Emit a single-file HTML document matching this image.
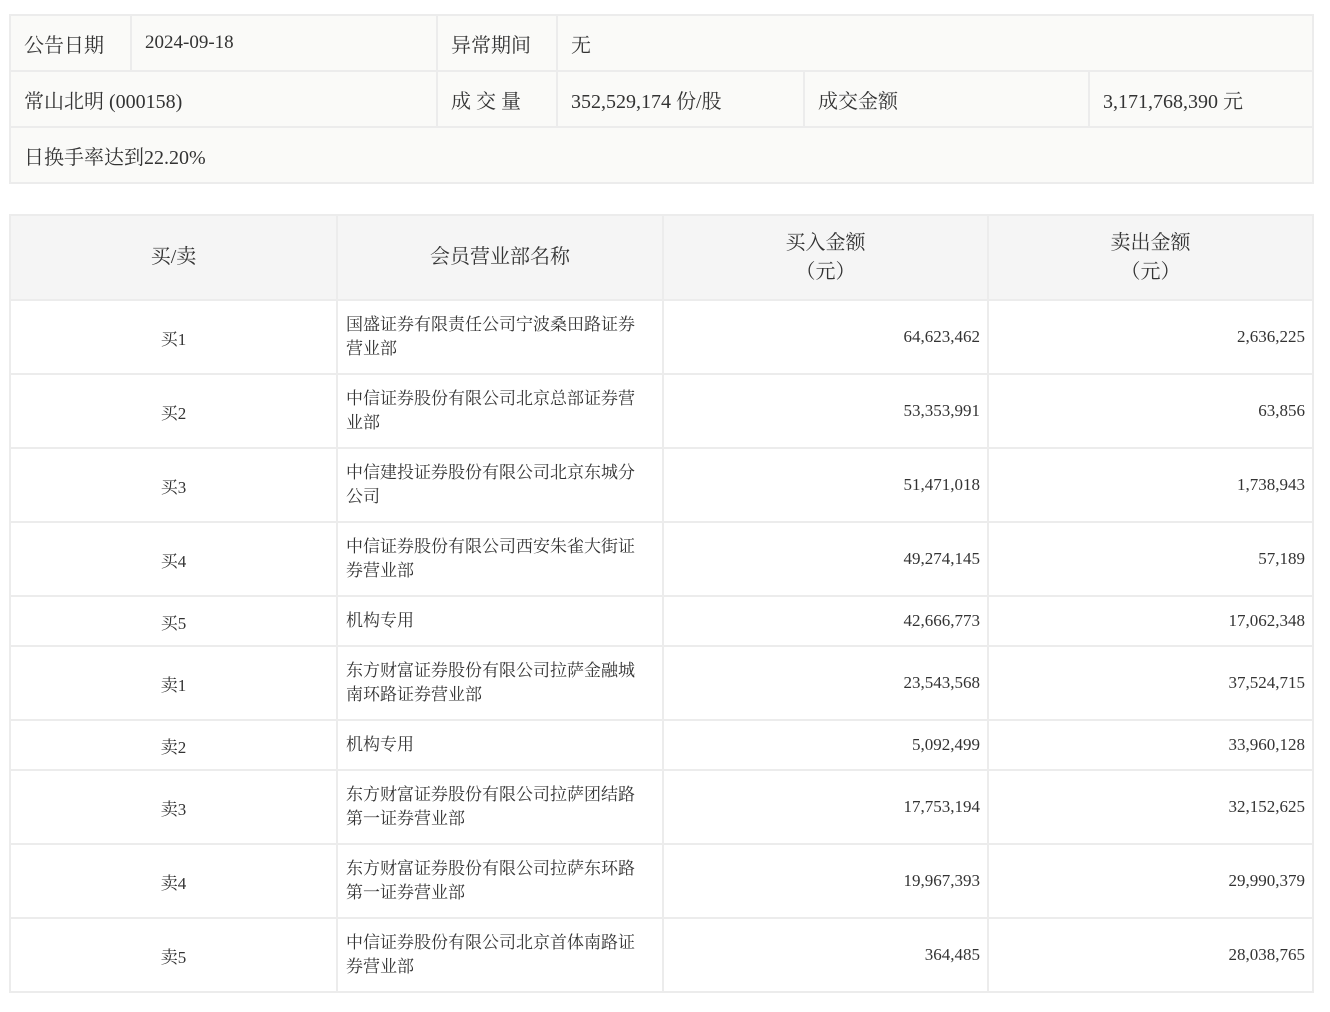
<!DOCTYPE html>
<html><head><meta charset="utf-8"><style>
body{margin:0;background:#fff;width:1330px;height:1012px;position:relative;font-family:"Liberation Serif","Noto Serif CJK SC",serif;color:#333}
table{border-collapse:collapse;table-layout:fixed;position:absolute;left:9px}
td{border:2px solid #ececec;padding:0;}
#t1{top:14px;width:1305px;background:#fafaf8;font-size:20px}
#t1 td{height:54px;padding-left:13px}
#t2{top:214px;width:1305px;font-size:17px}
#t2 .h td{background:#f5f5f5;height:83px;text-align:center;font-size:20px;line-height:29px}
#t2 td.c{text-align:center}
#t2 td.n{padding-left:8px;padding-right:22px;line-height:24px}
#t2 td.r{text-align:right;padding-right:7px}
.t{height:74px}.s{height:50px}
</style></head><body>
<table id="t1">
<colgroup><col style="width:121px"><col style="width:306px"><col style="width:120px"><col style="width:247px"><col style="width:285px"><col></colgroup>
<tr><td>公告日期</td><td style="font-size:19px">2024-09-18</td><td>异常期间</td><td colspan="3">无</td></tr>
<tr><td colspan="2">常山北明 (000158)</td><td>成 交 量</td><td>352,529,174 份/股</td><td>成交金额</td><td>3,171,768,390 元</td></tr>
<tr><td colspan="6">日换手率达到22.20%</td></tr>
</table>
<table id="t2">
<colgroup><col style="width:327px"><col style="width:326px"><col style="width:325px"><col></colgroup>
<tr class="h"><td>买/卖</td><td>会员营业部名称</td><td>买入金额<br>（元）</td><td>卖出金额<br>（元）</td></tr>
<tr class="t"><td class="c">买1</td><td class="n">国盛证券有限责任公司宁波桑田路证券营业部</td><td class="r">64,623,462</td><td class="r">2,636,225</td></tr>
<tr class="t"><td class="c">买2</td><td class="n">中信证券股份有限公司北京总部证券营业部</td><td class="r">53,353,991</td><td class="r">63,856</td></tr>
<tr class="t"><td class="c">买3</td><td class="n">中信建投证券股份有限公司北京东城分公司</td><td class="r">51,471,018</td><td class="r">1,738,943</td></tr>
<tr class="t"><td class="c">买4</td><td class="n">中信证券股份有限公司西安朱雀大街证券营业部</td><td class="r">49,274,145</td><td class="r">57,189</td></tr>
<tr class="s"><td class="c">买5</td><td class="n">机构专用</td><td class="r">42,666,773</td><td class="r">17,062,348</td></tr>
<tr class="t"><td class="c">卖1</td><td class="n">东方财富证券股份有限公司拉萨金融城南环路证券营业部</td><td class="r">23,543,568</td><td class="r">37,524,715</td></tr>
<tr class="s"><td class="c">卖2</td><td class="n">机构专用</td><td class="r">5,092,499</td><td class="r">33,960,128</td></tr>
<tr class="t"><td class="c">卖3</td><td class="n">东方财富证券股份有限公司拉萨团结路第一证券营业部</td><td class="r">17,753,194</td><td class="r">32,152,625</td></tr>
<tr class="t"><td class="c">卖4</td><td class="n">东方财富证券股份有限公司拉萨东环路第一证券营业部</td><td class="r">19,967,393</td><td class="r">29,990,379</td></tr>
<tr class="t"><td class="c">卖5</td><td class="n">中信证券股份有限公司北京首体南路证券营业部</td><td class="r">364,485</td><td class="r">28,038,765</td></tr>
</table>
</body></html>
